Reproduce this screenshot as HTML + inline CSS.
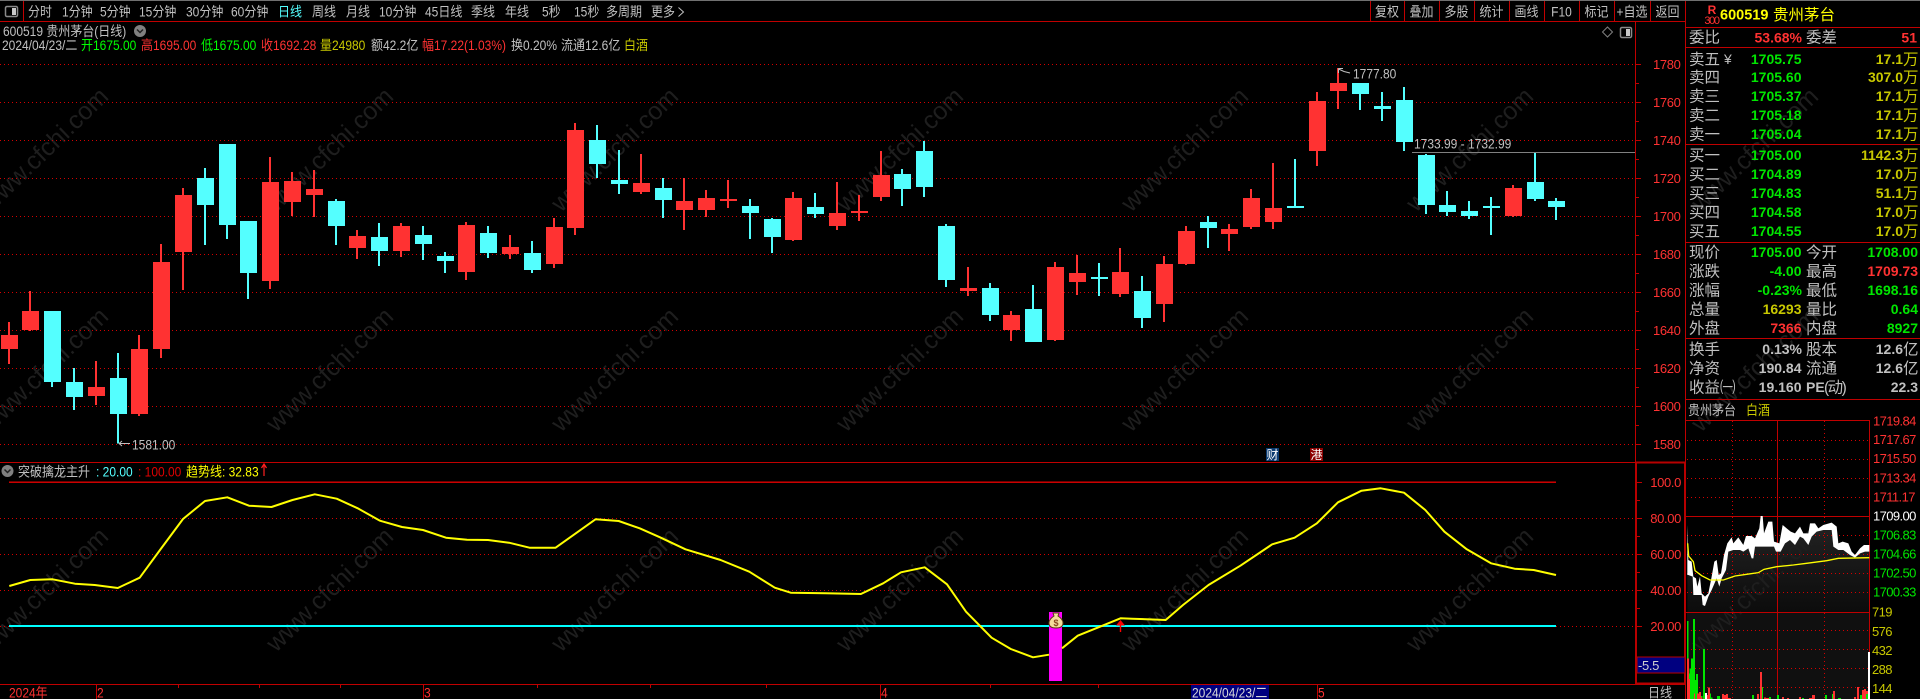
<!DOCTYPE html>
<html lang="zh"><head><meta charset="utf-8"><title>贵州茅台 日线</title>
<style>
html,body{margin:0;padding:0;background:#000;width:1920px;height:699px;overflow:hidden}
svg{display:block}
text{font-family:"Liberation Sans","Noto Sans CJK SC",sans-serif;white-space:pre}
.s{font-size:12px;fill:#c0c0c0;transform-box:fill-box;transform-origin:50% 50%;transform:scaleY(1.14)}
.a{font-size:13px;letter-spacing:-.35px;fill:#ff3232}
.l{font-size:15.5px;fill:#c0c0c0}
.v{font-size:14px;font-weight:700}
.r{fill:#ff3232}.g{fill:#00e600}.y{fill:#c8c800}.w{fill:#c0c0c0}.c{fill:#54ffff}.yy{fill:#ffff00}
.wm{font-size:25px;fill:#1e1e1e}
</style></head><body>
<svg width="1920" height="699" viewBox="0 0 1920 699" xmlns="http://www.w3.org/2000/svg">
<rect width="1920" height="699" fill="#000"/>
<!-- mini chart fills -->
<rect x="1687" y="612" width="182" height="87" fill="#101010"/>
<defs><linearGradient id="f" x1="0" y1="0" x2="0" y2="1"><stop offset="0" stop-color="#242424"/><stop offset="1" stop-color="#0c0c0c"/></linearGradient></defs>
<g transform="translate(1620 430) scale(.33333)">
<path fill="url(#f)" d="M202 285L205 390 215 395 220 440 228 445 232 470 240 440 245 490 255 500 265 490 275 440 283 395 290 390 296 435 303 430 312 375 322 340 335 322 340 340 355 322 370 345 378 318 395 318 405 325 418 295 422 258 428 258 432 310 445 275 457 275 462 335 478 340 488 285 500 295 512 305 525 310 540 290 550 310 565 310 570 280 585 280 595 295 610 285 635 278 650 290 655 340 668 335 685 340 695 365 705 375 720 355 732 345 748 345V547H202Z"/>
</g>
<!-- watermark -->
<g class="wm">
<text class="wm" transform="translate(-9 213) rotate(-44)">www.cfchi.com</text>
<text class="wm" transform="translate(276 213) rotate(-44)">www.cfchi.com</text>
<text class="wm" transform="translate(561 213) rotate(-44)">www.cfchi.com</text>
<text class="wm" transform="translate(846 213) rotate(-44)">www.cfchi.com</text>
<text class="wm" transform="translate(1131 213) rotate(-44)">www.cfchi.com</text>
<text class="wm" transform="translate(1416 213) rotate(-44)">www.cfchi.com</text>
<text class="wm" transform="translate(1701 213) rotate(-44)">www.cfchi.com</text>
<text class="wm" transform="translate(-9 433) rotate(-44)">www.cfchi.com</text>
<text class="wm" transform="translate(276 433) rotate(-44)">www.cfchi.com</text>
<text class="wm" transform="translate(561 433) rotate(-44)">www.cfchi.com</text>
<text class="wm" transform="translate(846 433) rotate(-44)">www.cfchi.com</text>
<text class="wm" transform="translate(1131 433) rotate(-44)">www.cfchi.com</text>
<text class="wm" transform="translate(1416 433) rotate(-44)">www.cfchi.com</text>
<text class="wm" transform="translate(1701 433) rotate(-44)">www.cfchi.com</text>
<text class="wm" transform="translate(-9 653) rotate(-44)">www.cfchi.com</text>
<text class="wm" transform="translate(276 653) rotate(-44)">www.cfchi.com</text>
<text class="wm" transform="translate(561 653) rotate(-44)">www.cfchi.com</text>
<text class="wm" transform="translate(846 653) rotate(-44)">www.cfchi.com</text>
<text class="wm" transform="translate(1131 653) rotate(-44)">www.cfchi.com</text>
<text class="wm" transform="translate(1416 653) rotate(-44)">www.cfchi.com</text>
<text class="wm" transform="translate(1701 653) rotate(-44)">www.cfchi.com</text>
</g>
<!-- dotted grids -->
<g stroke="#d40000" stroke-width="1" stroke-dasharray="1 3" shape-rendering="crispEdges" fill="none">
<path d="M0 64.5H1635M0 102.5H1635M0 140.5H1635M0 178.5H1635M0 216.5H1635M0 254.5H1635M0 292.5H1635M0 330.5H1635M0 368.5H1635M0 406.5H1635M0 444.5H1635M0 518.5H1635M0 554.5H1635M0 590.5H1635M0 626.5H1635"/>
<path d="M1687 440.5H1869M1687 459.5H1869M1687 478.5H1869M1687 497.5H1869M1687 535.5H1869M1687 554.5H1869M1687 573.5H1869M1687 592.5H1869M1687 630.5H1869M1687 649.5H1869M1687 668.5H1869M1687 687.5H1869M1732.5 421V699M1824.5 421V699"/>
</g>
<!-- structure lines -->
<g stroke="#c00000" stroke-width="1" shape-rendering="crispEdges" fill="none">
<path d="M0 21.5H1686M23.5 1V21M1370.5 1V21M1404.5 1V21M1439.5 1V21M1474.5 1V21M1509.5 1V21M1544.5 1V21M1579.5 1V21M1614.5 1V21M1650.5 1V21"/>
<path d="M1635.5 21V462M1685.5 0V699"/>
<path d="M1686 27.5H1920M1686 47.5H1920M1686 144.5H1920M1686 242.5H1920M1686 338.5H1920M1686 399.5H1920M1686 420.5H1869M1869.5 420V699M1686 516.5H1869M1686 612.5H1869M1777.5 421V699"/>
<path d="M0 462.5H1635M0 684.5H1686M96.5 684V699M423.5 684V699M880.5 684V699M1317.5 684V699M178.5 684V688M259.5 684V688M340.5 684V688M537.5 684V688M650.5 684V688M766.5 684V688M990.5 684V688M1098.5 684V688"/>
<path d="M1636 64.5H1641M1636 102.5H1641M1636 140.5H1641M1636 178.5H1641M1636 216.5H1641M1636 254.5H1641M1636 292.5H1641M1636 330.5H1641M1636 368.5H1641M1636 406.5H1641M1636 444.5H1641M1636 83.5H1639M1636 121.5H1639M1636 159.5H1639M1636 197.5H1639M1636 235.5H1639M1636 273.5H1639M1636 311.5H1639M1636 349.5H1639M1636 387.5H1639M1636 425.5H1639"/>
<path d="M1637 482.5H1642M1637 518.5H1642M1637 554.5H1642M1637 590.5H1642M1637 626.5H1642M1637 500.5H1640M1637 536.5H1640M1637 572.5H1640M1637 608.5H1640"/>
</g>
<rect x="0" y="0" width="1920" height="1" fill="#707070"/>
<rect x="1636" y="462.5" width="49" height="221" fill="none" stroke="#b80000" stroke-width="2"/>
<rect x="1637" y="657" width="48" height="16" fill="#000080" stroke="#b80000" stroke-width="1"/>
<!-- candles -->
<g fill="none" shape-rendering="crispEdges">
<g transform="translate(0 130) scale(.33333)">
<path stroke="#ff3232" stroke-width="6" d="M27 576V702M90 483V603M288 693V825M417 615V858M483 342V684M549 174V480M810 81V477M876 126V258M942 120V261M1071 300V387M1203 279V381M1398 276V450"/>
<path stroke="#ff3232" stroke-width="51" d="M28.5 615V657M91.5 543V600M289.5 771V798M418.5 657V852M484.5 396V657M550.5 195V366M811.5 156V453M877.5 153V216M943.5 177V195M1072.5 318V354M1204.5 288V363M1399.5 285V426"/>
<path stroke="#54ffff" stroke-width="6" d="M156 543V771M222 714V840M354 669V940M615 114V345M681 42V327M744 273V507M1008 207V345M1137 279V408M1269 288V390M1335 366V429"/>
<path stroke="#54ffff" stroke-width="51" d="M157.5 543V756M223.5 756V801M355.5 744V852M616.5 144V225M682.5 42V285M745.5 273V429M1009.5 213V288M1138.5 321V363M1270.5 315V342M1336.5 378V393"/>
</g>
<g transform="translate(470 110) scale(.33333)">
<path stroke="#ff3232" stroke-width="6" d="M120 375V447M252 324V474M315 39V375M513 132V252M642 204V360M708 240V321M774 210V294M969 246V393M1101 216V360M1167 255V333M1233 123V273"/>
<path stroke="#ff3232" stroke-width="51" d="M121.5 411V432M253.5 351V462M316.5 60V354M514.5 219V246M643.5 273V300M709.5 264V300M775.5 267V273M970.5 264V390M1102.5 309V348M1168.5 303V309M1234.5 195V261"/>
<path stroke="#54ffff" stroke-width="6" d="M54 348V444M186 393V489M381 45V204M447 120V252M579 204V324M840 267V387M906 324V429M1035 249V324M1296 177V288M1362 93V261"/>
<path stroke="#54ffff" stroke-width="51" d="M55.5 369V429M187.5 429V480M382.5 90V162M448.5 210V222M580.5 234V270M841.5 288V309M907.5 327V381M1036.5 291V312M1297.5 192V237M1363.5 123V231"/>
</g>
<g transform="translate(930 50) scale(.33333)">
<path stroke="#ff3232" stroke-width="6" d="M114 651V738M243 783V873M375 636V873M441 615V735M570 594V741M702 618V816M768 528V645M897 522V603M963 417V537M1029 339V537M1161 126V348M1224 54V177"/>
<path stroke="#ff3232" stroke-width="51" d="M115.5 714V723M244.5 795V840M376.5 651V870M442.5 669V696M571.5 666V732M703.5 642V762M769.5 543V642M898.5 537V552M964.5 444V531M1030.5 474V516M1162.5 153V303M1225.5 99V123"/>
<path stroke="#54ffff" stroke-width="6" d="M48 522V711M180 699V813M309 705V876M507 639V738M636 678V834M834 498V594M1095 327V474M1290 99V180"/>
<path stroke="#54ffff" stroke-width="51" d="M49.5 528V690M181.5 714V795M310.5 777V876M508.5 681V687M637.5 723V804M835.5 516V534M1096.5 468V474M1291.5 99V132"/>
</g>
<g transform="translate(1250 50) scale(.33333)">
<path stroke="#ff3232" stroke-width="6" d="M789 405V501"/>
<path stroke="#ff3232" stroke-width="51" d="M790.5 414V498"/>
<path stroke="#54ffff" stroke-width="6" d="M396 126V213M462 111V303M528 312V492M591 423V498M657 453V507M723 441V555M855 309V453M918 444V510"/>
<path stroke="#54ffff" stroke-width="51" d="M397.5 168V177M463.5 150V276M529.5 315V465M592.5 465V486M658.5 483V498M724.5 468V474M856.5 396V447M919.5 453V471"/>
</g>
</g>
<!-- annotations -->
<g fill="none" stroke="#c0c0c0" stroke-width="1">
<path d="M130 443.5H119M119 443.5L122 441M119 443.5L122 446"/>
<path d="M1338.5 68.5H1343M1338.5 68.5V73M1338.5 69L1344 71.5 1350 73"/>
</g>
<rect x="1412" y="152" width="223" height="1" fill="#808080"/>
<text class="s" x="132" y="449">1581.00</text>
<text class="s" x="1353" y="78">1777.80</text>
<text class="s" x="1414" y="148">1733.99 - 1732.99</text>
<!-- indicator lines -->
<rect x="9" y="481.5" width="1547" height="1.4" fill="#e00000"/>
<rect x="9" y="625" width="1547" height="2" fill="#00ffff"/>
<rect x="1049" y="612" width="13" height="69" fill="#ff00ff"/>
<path fill="none" stroke="#ffff00" stroke-width="2" stroke-linejoin="round" d="M9.3 586L30.3 580 52.6 579.3 74.9 583.7 94.7 585 117.8 588 139.7 577.7 160 550 183 519 205 501 227.3 497.3 249 505.7 271.5 507 292.5 500 314.8 494.3 336.7 498.7 357.7 508.3 380 520.7 402 527 423 530 446 537.7 467 539.7 488 540 509 542.7 529.5 547.7 555.6 547.7 595.5 519.3 618.7 521 639.7 528.3 660 537.3 685.5 549.3 720.6 560 749.3 571.7 774.8 587.7 790.7 592.7 825.8 593.3 860.9 594 883.2 583.3 901 572.3 924.7 567.3 947 584.3 966 611.7 991.6 637.7 1010.8 649 1033 657.3 1049 654.7M1062 648.3L1077.7 635.7 1100 626.7 1120.5 618.3 1132 618.7 1165.7 620 1183 605 1208.5 585 1240.4 565.7 1272.2 544.3 1294.6 537.7 1316.9 523.3 1338 502.3 1361.5 490.7 1380.7 488.3 1404 492.7 1425.3 510 1444.4 531.7 1466.8 549.3 1491 563.3 1514.6 568.7 1533.7 570 1556 575"/>
<path fill="#ff0000" d="M1120.5 620L1116 625.5H1119.8V632H1121.2V625.5H1125Z"/>
<!-- money bag -->
<path fill="#f4dc9c" stroke="#5a3a10" stroke-width="1" d="M1053 613H1059L1058 616C1061 618 1063 620 1063 623 1063 626.500 1060 628 1056 628 1052 628 1049 626.500 1049 623 1049 620 1051 618 1054 616Z"/>
<text x="1056" y="626" text-anchor="middle" style="font-size:9px;font-weight:700" fill="#8a4a20">$</text>
<!-- badges -->
<rect x="1266" y="448" width="13" height="13" fill="#0a3a70"/>
<text x="1272.500" y="459" text-anchor="middle" style="font-size:12px" fill="#fff">财</text>
<rect x="1310" y="448" width="13" height="13" fill="#8a0000"/>
<text x="1316.500" y="459" text-anchor="middle" style="font-size:12px" fill="#fff">港</text>
<!-- icons -->
<g fill="none">
<rect x="5.500" y="6.500" width="12" height="10" rx="1.500" stroke="#8a8a8a" stroke-width="1.500"/>
<rect x="12" y="8" width="4" height="7" fill="#c8c8c8"/>
<rect x="1620.500" y="27.500" width="11" height="10" rx="1.500" stroke="#8a8a8a" stroke-width="1.500"/>
<rect x="1626" y="29" width="4" height="7" fill="#c8c8c8"/>
<path stroke="#808080" stroke-width="1" d="M1607.500 27L1612.500 32 1607.500 37 1602.500 32Z"/>
<circle cx="140" cy="31" r="6" fill="#808080"/>
<path stroke="#222" stroke-width="1.500" d="M137 29.500L140 32.500 143 29.500"/>
<circle cx="7.500" cy="471" r="6" fill="#808080"/>
<path stroke="#222" stroke-width="1.500" d="M4.500 469.500L7.500 472.500 10.500 469.500"/>
<path stroke="#c0c0c0" stroke-width="1" d="M678.500 7.500L683.500 12 678.500 16.500"/>
<path stroke="#ff2020" stroke-width="1.200" d="M264 476V465M261.500 468L264 464 266.500 468"/>
</g>
<!-- toolbar -->
<g>
<text class="s" x="28" y="16">分时</text><text class="s" x="62" y="16">1分钟</text><text class="s" x="100" y="16">5分钟</text><text class="s" x="139" y="16">15分钟</text><text class="s" x="186" y="16">30分钟</text><text class="s" x="231" y="16">60分钟</text><text class="s" x="278" y="16" style="fill:#54ffff">日线</text><text class="s" x="312" y="16">周线</text><text class="s" x="346" y="16">月线</text><text class="s" x="379" y="16">10分钟</text><text class="s" x="425" y="16">45日线</text><text class="s" x="471" y="16">季线</text><text class="s" x="505" y="16">年线</text><text class="s" x="542" y="16">5秒</text><text class="s" x="574" y="16">15秒</text><text class="s" x="606" y="16">多周期</text><text class="s" x="651" y="16">更多</text>
<text class="s" x="1387" y="16" text-anchor="middle">复权</text><text class="s" x="1421.500" y="16" text-anchor="middle">叠加</text><text class="s" x="1456.500" y="16" text-anchor="middle">多股</text><text class="s" x="1491.500" y="16" text-anchor="middle">统计</text><text class="s" x="1526.500" y="16" text-anchor="middle">画线</text><text class="s" x="1561.500" y="16" text-anchor="middle">F10</text><text class="s" x="1596.500" y="16" text-anchor="middle">标记</text><text class="s" x="1632" y="16" text-anchor="middle">+自选</text><text class="s" x="1667.500" y="16" text-anchor="middle">返回</text>
<text class="s" x="3" y="35.500">600519 贵州茅台(日线)</text>
<text class="s" x="2" y="49.500">2024/04/23/二</text>
<text class="s" x="81" y="49.500" style="fill:#00ff00">开1675.00</text>
<text class="s" x="141" y="49.500" style="fill:#ff3232">高1695.00</text>
<text class="s" x="201" y="49.500" style="fill:#00ff00">低1675.00</text>
<text class="s" x="261" y="49.500" style="fill:#ff3232">收1692.28</text>
<text class="s" x="320" y="49.500" style="fill:#c8c800">量24980</text>
<text class="s" x="371" y="49.500">额42.2亿</text>
<text class="s" x="422" y="49.500" style="fill:#ff3232">幅17.22(1.03%)</text>
<text class="s" x="511" y="49.500">换0.20%</text>
<text class="s" x="561" y="49.500">流通12.6亿</text>
<text class="s" x="624" y="49.500" style="fill:#c8c800">白酒</text>
<!-- indicator title -->
<text class="s" x="18" y="476">突破擒龙主升</text>
<text class="s" x="96" y="476" style="fill:#54ffff">: 20.00</text>
<text class="s" x="138" y="476" style="fill:#e00000">: 100.00</text>
<text class="s" x="186" y="476" style="fill:#ffff00">趋势线: 32.83</text>
<!-- dates -->
<text class="s" x="9" y="697" style="fill:#ff3232">2024年</text>
<text class="s" x="97" y="697" style="fill:#ff3232">2</text>
<text class="s" x="424" y="697" style="fill:#ff3232">3</text>
<text class="s" x="881" y="697" style="fill:#ff3232">4</text>
<text class="s" x="1318" y="697" style="fill:#ff3232">5</text>
<rect x="1191" y="685" width="78" height="14" fill="#000080"/>
<text class="s" x="1192" y="697" style="fill:#d8d8d8">2024/04/23/二</text>
<text class="s" x="1648" y="697">日线</text>
</g>
<!-- main axis -->
<text class="a" x="1653" y="69">1780</text><text class="a" x="1653" y="107">1760</text><text class="a" x="1653" y="145">1740</text><text class="a" x="1653" y="183">1720</text><text class="a" x="1653" y="221">1700</text><text class="a" x="1653" y="259">1680</text><text class="a" x="1653" y="297">1660</text><text class="a" x="1653" y="335">1640</text><text class="a" x="1653" y="373">1620</text><text class="a" x="1653" y="411">1600</text><text class="a" x="1653" y="449">1580</text>
<text class="a" x="1681" y="487" text-anchor="end">100.0</text><text class="a" x="1681" y="523" text-anchor="end">80.00</text><text class="a" x="1681" y="559" text-anchor="end">60.00</text><text class="a" x="1681" y="595" text-anchor="end">40.00</text><text class="a" x="1681" y="631" text-anchor="end">20.00</text>
<text class="a" x="1638" y="670" style="fill:#d0d0d0">-5.5</text>
<!-- mini chart line & volume -->
<g transform="translate(1620 430) scale(.33333)">
<path fill="#fff" d="M202 285L205 390 215 395 220 440 228 445 232 470 240 440 245 490 255 500 265 490 275 440 283 395 290 390 296 435 303 430 312 375 322 340 335 322 340 340 355 322 370 345 378 318 395 318 405 325 418 295 422 258 428 258 432 310 445 275 457 275 462 335 478 340 488 285 500 295 512 305 525 310 540 290 550 310 565 310 570 280 585 280 595 295 610 285 635 278 650 290 655 340 668 335 685 340 695 365 705 375 720 355 732 345 748 345V365H735L720 370 705 383 690 375 670 360 655 360 640 350 635 300 610 300 590 305 575 320 565 345 550 325 540 320 525 345 510 330 495 340 482 365 468 365 462 350 445 350 420 350 405 350 400 385 395 385 385 355 370 365 360 360 340 360 325 365 318 420 305 445 298 470 290 445 275 480 265 500 255 528 248 525 245 495 232 495 220 495 218 440 205 435 202 435Z"/>
<path fill="none" stroke="#ffff00" stroke-width="4" d="M203 340L206 378 220 395 225 422 245 437 270 450 310 450 345 438 380 433 415 428 432 418 470 410 520 405 560 400 620 392 655 385 748 383"/>
</g>
<g transform="translate(1686 610) scale(.33333)" shape-rendering="crispEdges">
<path fill="#00e600" d="M3 33H7V267H3ZM7 190H10V267H7ZM10 175H15V267H10ZM15 145H21V267H15ZM21 27H27V267H21ZM27 210H30V267H27ZM30 192H36V267H30ZM36 258H42V267H36ZM42 258H50V267H42ZM51 117H57V267H51ZM69 250H75V267H69ZM75 262H80V267H75ZM93 258H102V267H93ZM198 255H204V267H198ZM225 231H231V267H225ZM249 261H255V267H249ZM273 255H279V267H273ZM348 264H354V267H348ZM417 255H423V267H417ZM438 252H444V267H438ZM456 264H465V267H456ZM522 255H528V267H522ZM540 252H546V267H540Z"/>
<path fill="#ff3232" d="M3 145H9V267H3ZM9 207H12V267H9ZM24 250H27V267H24ZM33 250H39V267H33ZM39 246H45V267H39ZM45 262H50V267H45ZM63 255H69V267H63ZM66 232H72V267H66ZM108 252H114V267H108ZM114 255H120V267H114ZM120 252H126V267H120ZM126 264H135V267H126ZM213 252H219V267H213ZM222 186H228V267H222ZM234 262H240V267H234ZM240 264H249V267H240ZM288 261H294V267H288ZM303 264H309V267H303ZM339 261H345V267H339ZM369 264H378V267H369ZM378 255H387V267H378ZM441 243H447V267H441ZM504 261H510V267H504ZM513 231H519V267H513ZM528 240H534V267H528ZM534 237H540V267H534ZM540 243H546V252H540Z"/>
<path fill="#fff" d="M57 249H63V267H57ZM546 126H552V267H546Z"/>
</g>
<!-- mini axis -->
<g>
<text class="a r" x="1873" y="425.500" style="letter-spacing:-.6px">1719.84</text><text class="a" x="1873" y="444" style="letter-spacing:-.6px">1717.67</text><text class="a" x="1873" y="463" style="letter-spacing:-.6px">1715.50</text><text class="a" x="1873" y="482.500" style="letter-spacing:-.6px">1713.34</text><text class="a" x="1873" y="501.500" style="letter-spacing:-.6px">1711.17</text>
<text class="a" x="1873" y="520.500" style="letter-spacing:-.6px;fill:#fff">1709.00</text>
<text class="a" x="1873" y="539.500" style="letter-spacing:-.6px;fill:#00e600">1706.83</text><text class="a" x="1873" y="558.500" style="letter-spacing:-.6px;fill:#00e600">1704.66</text><text class="a" x="1873" y="577.500" style="letter-spacing:-.6px;fill:#00e600">1702.50</text><text class="a" x="1873" y="596.500" style="letter-spacing:-.6px;fill:#00e600">1700.33</text>
<text class="a" x="1872" y="616.500" style="letter-spacing:-.6px;fill:#c8c800">719</text><text class="a" x="1872" y="636" style="letter-spacing:-.6px;fill:#c8c800">576</text><text class="a" x="1872" y="655" style="letter-spacing:-.6px;fill:#c8c800">432</text><text class="a" x="1872" y="674" style="letter-spacing:-.6px;fill:#c8c800">288</text><text class="a" x="1872" y="693" style="letter-spacing:-.6px;fill:#c8c800">144</text>
</g>
<!-- right panel -->
<text x="1712" y="14" text-anchor="middle" style="font-size:12px;font-weight:700" fill="#ff3232">R</text>
<text x="1711.500" y="24" text-anchor="middle" style="font-size:11px;letter-spacing:-1.400px" fill="#ff3232">300</text>
<text x="1720" y="19.500" class="yy" style="font-size:14.500px;font-weight:700">600519</text>
<text x="1773" y="20" class="yy" style="font-size:15.500px">贵州茅台</text>
<text class="l" x="1689" y="42.500">委比</text><text class="v r" x="1802" y="42.500" text-anchor="end">53.68%</text><text class="l" x="1806" y="42.500">委差</text><text class="v r" x="1917" y="42.500" text-anchor="end">51</text>
<text class="l" x="1689" y="64.500">卖五</text><text x="1724" y="64" style="font-size:14px" fill="#c0c0c0">¥</text><text class="l" x="1689" y="82.500">卖四</text><text class="l" x="1689" y="101.500">卖三</text><text class="l" x="1689" y="120.500">卖二</text><text class="l" x="1689" y="139.500">卖一</text>
<text class="l" x="1689" y="160.500">买一</text><text class="l" x="1689" y="179.500">买二</text><text class="l" x="1689" y="198.500">买三</text><text class="l" x="1689" y="217.500">买四</text><text class="l" x="1689" y="236.500">买五</text>
<g text-anchor="end">
<text class="v g" x="1801.500" y="64">1705.75</text><text class="v g" x="1801.500" y="82">1705.60</text><text class="v g" x="1801.500" y="101">1705.37</text><text class="v g" x="1801.500" y="120">1705.18</text><text class="v g" x="1801.500" y="139">1705.04</text>
<text class="v g" x="1801.500" y="160">1705.00</text><text class="v g" x="1801.500" y="179">1704.89</text><text class="v g" x="1801.500" y="198">1704.83</text><text class="v g" x="1801.500" y="217">1704.58</text><text class="v g" x="1801.500" y="236">1704.55</text>
<text class="v y" x="1903" y="64">17.1</text><text class="v y" x="1903" y="82">307.0</text><text class="v y" x="1903" y="101">17.1</text><text class="v y" x="1903" y="120">17.1</text><text class="v y" x="1903" y="139">17.1</text>
<text class="v y" x="1903" y="160">1142.3</text><text class="v y" x="1903" y="179">17.0</text><text class="v y" x="1903" y="198">51.1</text><text class="v y" x="1903" y="217">17.0</text><text class="v y" x="1903" y="236">17.0</text>
</g>
<g class="l">
<text class="l y" x="1903" y="64.500">万</text><text class="l y" x="1903" y="82.500">万</text><text class="l y" x="1903" y="101.500">万</text><text class="l y" x="1903" y="120.500">万</text><text class="l y" x="1903" y="139.500">万</text><text class="l y" x="1903" y="160.500">万</text><text class="l y" x="1903" y="179.500">万</text><text class="l y" x="1903" y="198.500">万</text><text class="l y" x="1903" y="217.500">万</text><text class="l y" x="1903" y="236.500">万</text>
</g>
<text class="l" x="1689" y="257.500">现价</text><text class="l" x="1689" y="276.500">涨跌</text><text class="l" x="1689" y="295.500">涨幅</text><text class="l" x="1689" y="314.500">总量</text><text class="l" x="1689" y="333.500">外盘</text>
<text class="l" x="1806" y="257.500">今开</text><text class="l" x="1806" y="276.500">最高</text><text class="l" x="1806" y="295.500">最低</text><text class="l" x="1806" y="314.500">量比</text><text class="l" x="1806" y="333.500">内盘</text>
<g text-anchor="end">
<text class="v g" x="1801.500" y="257">1705.00</text><text class="v g" x="1801.500" y="276">-4.00</text><text class="v g" x="1802" y="295">-0.23%</text><text class="v y" x="1801.500" y="314">16293</text><text class="v r" x="1801.500" y="333">7366</text>
<text class="v g" x="1918" y="257">1708.00</text><text class="v r" x="1918" y="276">1709.73</text><text class="v g" x="1918" y="295">1698.16</text><text class="v g" x="1918" y="314">0.64</text><text class="v g" x="1918" y="333">8927</text>
<text class="v w" x="1802" y="354">0.13%</text><text class="v w" x="1801.500" y="373">190.84</text><text class="v w" x="1801.500" y="392">19.160</text>
<text class="v w" x="1903" y="354">12.6</text><text class="v w" x="1903" y="373">12.6</text><text class="v w" x="1918" y="392">22.3</text>
</g>
<text class="l" x="1689" y="354.500">换手</text><text class="l" x="1689" y="373.500">净资</text><text class="l" x="1689" y="392.500">收益㈠</text>
<text class="l" x="1806" y="354.500">股本</text><text class="l" x="1806" y="373.500">流通</text><text class="v w" x="1806" y="392">PE</text><text class="l" x="1824" y="392.500" style="letter-spacing:-1.500px">(动)</text>
<text class="l" x="1903" y="354.500">亿</text><text class="l" x="1903" y="373.500">亿</text>
<text class="s" x="1688" y="414.500">贵州茅台</text><text class="s" x="1746" y="414.500" style="fill:#c8c800">白酒</text>
</svg>
</body></html>
